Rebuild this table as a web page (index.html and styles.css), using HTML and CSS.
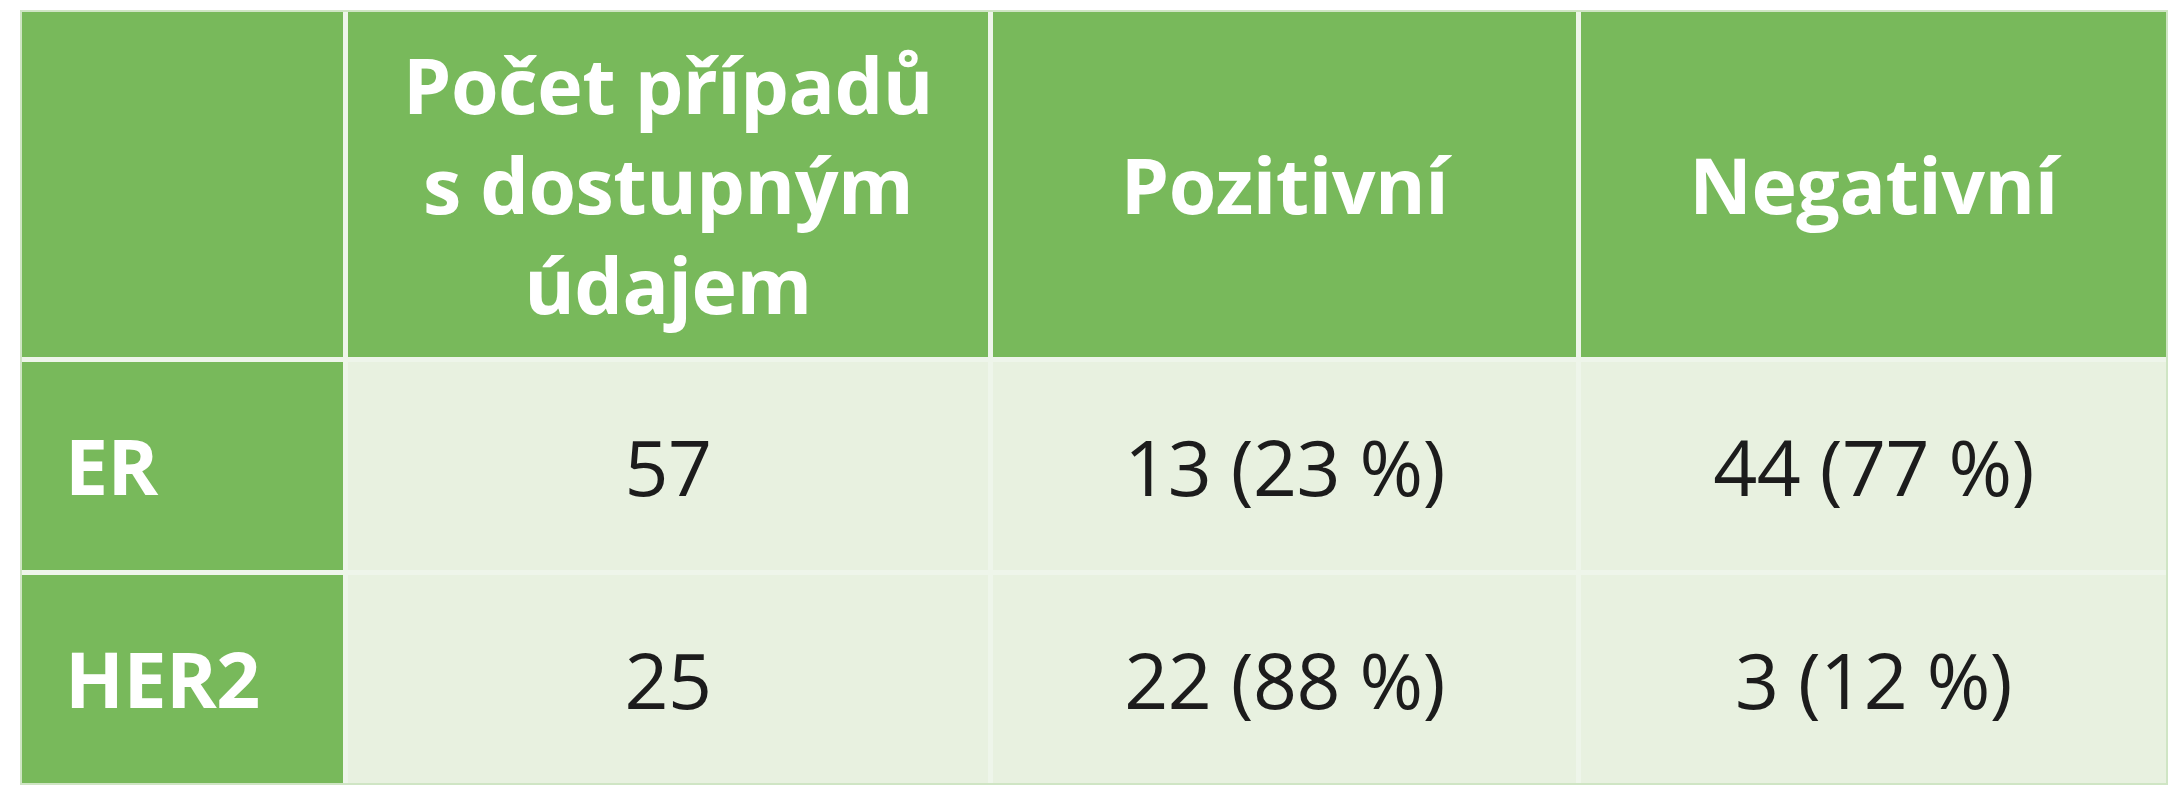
FILE: index.html
```html
<!DOCTYPE html>
<html lang="cs">
<head>
<meta charset="utf-8">
<title>Tabulka</title>
<link rel="stylesheet" href="styles.css">
</head>
<body>
<div class="table">
  <div class="cell head"></div>
  <div class="cell head center">Počet případů<br>s dostupným<br>údajem</div>
  <div class="cell head center">Pozitivní</div>
  <div class="cell head center">Negativní</div>

  <div class="cell head label">ER</div>
  <div class="cell body">57</div>
  <div class="cell body">13 (23 %)</div>
  <div class="cell body">44 (77 %)</div>

  <div class="cell head label">HER2</div>
  <div class="cell body">25</div>
  <div class="cell body">22 (88 %)</div>
  <div class="cell body">3 (12 %)</div>
</div>
</body>
</html>
```
FILE: styles.css
```css
html, body {
  margin: 0;
  padding: 0;
  background: #ffffff;
}
body {
  font-family: "Open Sans", "Noto Sans", sans-serif;
}
.table {
  margin: 10px 0 0 20px;
  display: grid;
  grid-template-columns: 321px 640px 583px 585px;
  grid-template-rows: 345px 208px 208px;
  gap: 5px;
  padding: 2px;
  width: max-content;
  background: #eef5ea;
  box-shadow: inset 0 0 0 2px #cfe5c4;
}
.cell {
  display: flex;
  align-items: center;
  justify-content: center;
  text-align: center;
}
.head {
  background: #78b95b;
  color: #ffffff;
  font-weight: 700;
  font-size: 77px;
  line-height: 100px;
  letter-spacing: -0.5px;
}
.label {
  justify-content: flex-start;
  padding-left: 43px;
}
.body {
  background: #e8f1e0;
  color: #1c1c1c;
  font-size: 77px;
  font-weight: 400;
  letter-spacing: -0.5px;
}
```
